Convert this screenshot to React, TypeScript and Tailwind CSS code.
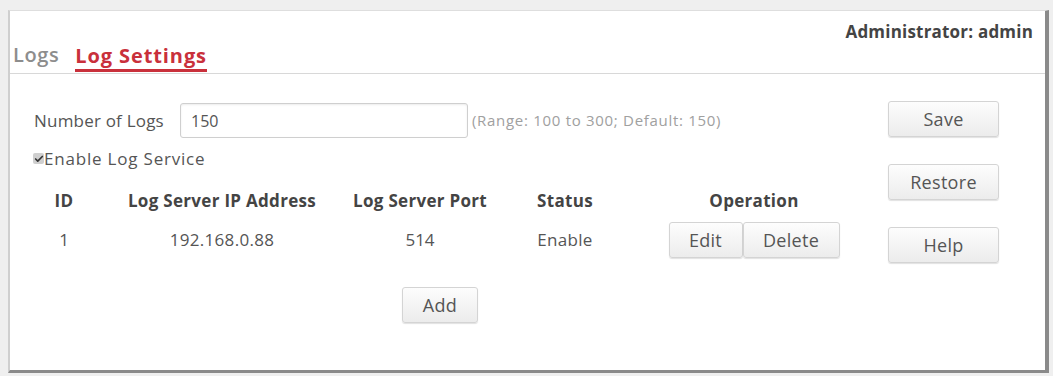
import { Check } from "lucide-react";

const FONT = { fontFamily: '"Open Sans", "Noto Sans", sans-serif' };

function Btn({ label, className = "" }: { label: string; className?: string }) {
  return (
    <button
      className={
        "h-[36px] rounded-[3px] border border-[#d4d4d4] bg-gradient-to-b from-[#fdfdfd] to-[#ececec] text-[18px] tracking-[0.3px] text-[#555] shadow-[0_1px_1px_rgba(0,0,0,0.12)] " +
        className
      }
    >
      {label}
    </button>
  );
}

export default function App() {
  return (
    <div style={FONT} className="h-[376px] w-[1053px] bg-[#efefef] pl-[8px] pr-[4px] pt-[10px] pb-[3px]">
      <div className="flex h-full flex-col border-l-2 border-b-[3px] border-r-[4px] border-t border-l-[#cfcfcf] border-b-[#8a8a8a] border-r-[#8a8a8a] border-t-[#dedede] bg-white">
        {/* header */}
        <div className="flex h-[63px] justify-between border-b border-[#d8d8d8]">
          <div className="flex items-end gap-[16px] pl-[3px]">
            <span className="pb-[3px] text-[20px] font-semibold tracking-[0.6px] text-[#8d8d8d]">Logs</span>
            <span className="mb-[1px] border-b-[3px] border-[#c9303b] leading-[26px] text-[20px] font-bold tracking-[0.9px] text-[#c9303b]">
              Log Settings
            </span>
          </div>
          <span className="pr-[12px] pt-[8px] text-[17px] font-bold tracking-[0.2px] text-[#444]">Administrator: admin</span>
        </div>

        {/* body */}
        <div className="flex flex-1">
          <div className="flex-1 pl-[22px] pt-[29px]">
            <div className="flex items-center">
              <span className="w-[148px] pl-[2px] text-[17px] tracking-[0.2px] text-[#555]">Number of Logs</span>
              <div className="flex h-[35px] w-[288px] items-center rounded-[3px] border border-[#cfcfcf] pl-[10px] text-[16px] text-[#555] shadow-[inset_0_1px_2px_rgba(0,0,0,0.08)]">
                150
              </div>
              <span className="pl-[4px] text-[15px] tracking-[0.7px] text-[#a0a0a0]">(Range: 100 to 300; Default: 150)</span>
            </div>

            <div className="mt-[8px] flex items-center pl-[1px] text-[17px] tracking-[0.8px] text-[#555]">
              <span className="flex h-[11px] w-[11px] items-center justify-center rounded-[2px] bg-[#cfcfcf]">
                <Check className="h-[10px] w-[10px] text-[#333]" strokeWidth={4} />
              </span>
              <span>Enable Log Service</span>
            </div>

            <div className="mt-[16px] grid grid-cols-[64px_252px_144px_146px_232px] items-center text-center text-[17px]">
              <span className="font-bold tracking-[0.3px] text-[#444]">ID</span>
              <span className="font-bold tracking-[0.3px] text-[#444]">Log Server IP Address</span>
              <span className="font-bold tracking-[0.3px] text-[#444]">Log Server Port</span>
              <span className="font-bold tracking-[0.3px] text-[#444]">Status</span>
              <span className="font-bold tracking-[0.3px] text-[#444]">Operation</span>

              <span className="mt-[9px] text-[#555]">1</span>
              <span className="mt-[9px] tracking-[0.3px] text-[#555]">192.168.0.88</span>
              <span className="mt-[9px] text-[#555]">514</span>
              <span className="mt-[9px] tracking-[0.3px] text-[#555]">Enable</span>
              <div className="mt-[9px] flex justify-center">
                <Btn label="Edit" className="w-[74px]" />
                <Btn label="Delete" className="w-[97px]" />
              </div>
            </div>

            <div className="mt-[29px] pl-[370px]">
              <Btn label="Add" className="w-[76px]" />
            </div>
          </div>

          <div className="mr-[46px] flex w-[111px] flex-col gap-[27px] pt-[27px]">
            <Btn label="Save" className="w-full" />
            <Btn label="Restore" className="w-full" />
            <Btn label="Help" className="w-full" />
          </div>
        </div>
      </div>
    </div>
  );
}
